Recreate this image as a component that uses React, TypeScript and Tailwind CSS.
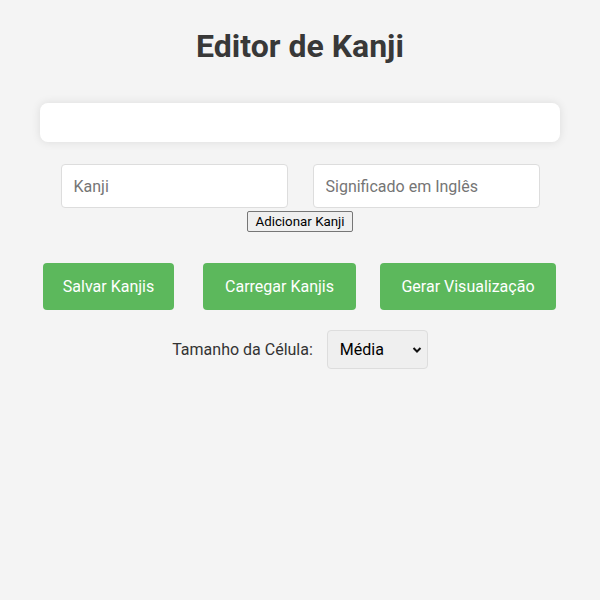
import React from "react";

export default function App() {
  return (
    <div className="min-h-[600px] w-full bg-[#f4f4f4] text-[#333] font-['Roboto',sans-serif]">
      <div className="flex flex-col items-center pt-[26px]">
        <h1 className="text-[32px] font-bold leading-[40px] text-[#383838]">Editor de Kanji</h1>
        <div className="mt-[37px] h-[39px] w-[520px] rounded-[8px] bg-white shadow-[0_0_10px_rgba(0,0,0,0.1)]"></div>
        <div className="mt-[22px] flex w-full justify-center gap-[25px]">
          <input
            placeholder="Kanji"
            className="box-border h-[44px] w-[227px] rounded-[4px] border border-[#ddd] bg-white px-[12px] text-[16px] text-[#333] placeholder:text-[#757575] outline-none font-['Roboto',sans-serif]"
          />
          <input
            placeholder="Significado em Inglês"
            className="box-border h-[44px] w-[227px] rounded-[4px] border border-[#ddd] bg-white px-[12px] text-[16px] text-[#333] placeholder:text-[#757575] outline-none font-['Roboto',sans-serif]"
          />
        </div>
        <button className="mt-[3px] box-border h-[21px] w-[106px] rounded-[2px] border border-[#767676] bg-[#efefef] px-[6px] text-[13.33px] leading-[19px] text-black font-['Roboto',sans-serif]">
          Adicionar Kanji
        </button>
      </div>
      <div className="mt-[31px] flex items-center pl-[43px]">
        <button className="h-[47px] w-[131px] rounded-[4px] bg-[#5cb85c] text-[16px] text-white font-['Roboto',sans-serif]">
          Salvar Kanjis
        </button>
        <button className="ml-[29px] h-[47px] w-[153px] rounded-[4px] bg-[#5cb85c] text-[16px] text-white font-['Roboto',sans-serif]">
          Carregar Kanjis
        </button>
        <button className="ml-[24px] h-[47px] w-[176px] rounded-[4px] bg-[#5cb85c] text-[16px] text-white font-['Roboto',sans-serif]">
          Gerar Visualização
        </button>
      </div>
      <div className="mt-[20px] flex items-center justify-center gap-[14px]">
        <span className="text-[16px] text-[#333]">Tamanho da Célula:</span>
        <div className="relative box-border flex h-[39px] w-[101px] items-center rounded-[4px] border border-[#ddd] bg-[#efefef] pl-[12px] text-[16px] text-black">
          <span>Média</span>
          <svg className="absolute right-[5px] top-[15px]" width="10" height="8" viewBox="0 0 10 8">
            <path d="M1.5 2 L5 5.5 L8.5 2" fill="none" stroke="#111" strokeWidth="2" />
          </svg>
        </div>
      </div>
    </div>
  );
}
